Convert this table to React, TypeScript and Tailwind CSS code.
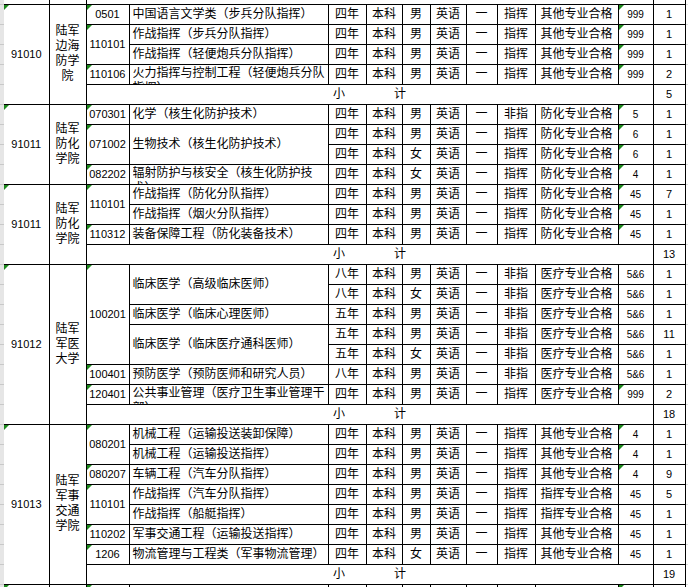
import React from "react";

type Row = {
  code?: string;
  codeSpan?: number;
  name?: string;
  nameSpan?: number;
  clip?: boolean;
  cells: string[];
  num: string;
  tri?: boolean;
  count: string;
};

type Group = {
  id: string;
  school: string[];
  rows: Row[];
  total?: string;
};

const std = (years: string, sex: string, kind: string, check: string) => [years, "本科", sex, "英语", "一", kind, check];

const groups: Group[] = [
  {
    id: "91010",
    school: ["陆军", "边海", "防学", "院"],
    total: "5",
    rows: [
      { code: "0501", name: "中国语言文学类（步兵分队指挥）", cells: std("四年", "男", "指挥", "其他专业合格"), num: "999", tri: true, count: "1" },
      { code: "110101", codeSpan: 2, name: "作战指挥（步兵分队指挥）", cells: std("四年", "男", "指挥", "其他专业合格"), num: "999", tri: true, count: "1" },
      { name: "作战指挥（轻便炮兵分队指挥）", cells: std("四年", "男", "指挥", "其他专业合格"), num: "999", tri: true, count: "1" },
      { code: "110106", name: "火力指挥与控制工程（轻便炮兵分队指挥）", clip: true, cells: std("四年", "男", "指挥", "其他专业合格"), num: "999", tri: true, count: "2" },
    ],
  },
  {
    id: "91011",
    school: ["陆军", "防化", "学院"],
    rows: [
      { code: "070301", name: "化学（核生化防护技术）", cells: std("四年", "男", "非指", "防化专业合格"), num: "5", tri: true, count: "1" },
      { code: "071002", codeSpan: 2, name: "生物技术（核生化防护技术）", nameSpan: 2, cells: std("四年", "男", "指挥", "防化专业合格"), num: "6", tri: true, count: "1" },
      { cells: std("四年", "女", "指挥", "防化专业合格"), num: "6", tri: true, count: "1" },
      { code: "082202", name: "辐射防护与核安全（核生化防护技术）", clip: true, cells: std("四年", "女", "指挥", "防化专业合格"), num: "4", tri: true, count: "1" },
    ],
  },
  {
    id: "91011",
    school: ["陆军", "防化", "学院"],
    total: "13",
    rows: [
      { code: "110101", codeSpan: 2, name: "作战指挥（防化分队指挥）", cells: std("四年", "男", "指挥", "防化专业合格"), num: "45", tri: true, count: "7" },
      { name: "作战指挥（烟火分队指挥）", cells: std("四年", "男", "指挥", "防化专业合格"), num: "45", tri: true, count: "1" },
      { code: "110312", name: "装备保障工程（防化装备技术）", cells: std("四年", "男", "指挥", "防化专业合格"), num: "45", tri: true, count: "1" },
    ],
  },
  {
    id: "91012",
    school: ["陆军", "军医", "大学"],
    total: "18",
    rows: [
      { code: "100201", codeSpan: 5, name: "临床医学（高级临床医师）", nameSpan: 2, cells: std("八年", "男", "非指", "医疗专业合格"), num: "5&6", count: "1" },
      { cells: std("八年", "女", "非指", "医疗专业合格"), num: "5&6", count: "1" },
      { name: "临床医学（临床心理医师）", cells: std("五年", "男", "非指", "医疗专业合格"), num: "5&6", count: "1" },
      { name: "临床医学（临床医疗通科医师）", nameSpan: 2, cells: std("五年", "男", "非指", "医疗专业合格"), num: "5&6", count: "11" },
      { cells: std("五年", "女", "非指", "医疗专业合格"), num: "5&6", count: "1" },
      { code: "100401", name: "预防医学（预防医师和研究人员）", cells: std("八年", "男", "非指", "医疗专业合格"), num: "5&6", count: "1" },
      { code: "120401", name: "公共事业管理（医疗卫生事业管理干部）", clip: true, cells: std("四年", "男", "指挥", "医疗专业合格"), num: "999", tri: true, count: "2" },
    ],
  },
  {
    id: "91013",
    school: ["陆军", "军事", "交通", "学院"],
    total: "19",
    rows: [
      { code: "080201", codeSpan: 2, name: "机械工程（运输投送装卸保障）", cells: std("四年", "男", "指挥", "其他专业合格"), num: "4", tri: true, count: "1" },
      { name: "机械工程（运输投送指挥）", cells: std("四年", "男", "指挥", "其他专业合格"), num: "4", tri: true, count: "1" },
      { code: "080207", name: "车辆工程（汽车分队指挥）", cells: std("四年", "男", "指挥", "其他专业合格"), num: "4", tri: true, count: "9" },
      { code: "110101", codeSpan: 2, name: "作战指挥（汽车分队指挥）", cells: std("四年", "男", "指挥", "指挥专业合格"), num: "45", count: "5" },
      { name: "作战指挥（船艇指挥）", cells: std("四年", "男", "指挥", "指挥专业合格"), num: "45", count: "1" },
      { code: "110202", name: "军事交通工程（运输投送指挥）", cells: std("四年", "男", "指挥", "其他专业合格"), num: "45", count: "1" },
      { code: "1206", name: "物流管理与工程类（军事物流管理）", cells: std("四年", "女", "指挥", "其他专业合格"), num: "45", count: "1" },
    ],
  },
];

// green "number stored as text" marker
const Tri = () => (
  <span className="absolute left-0 top-0 h-0 w-0 border-t-[5px] border-r-[5px] border-t-[#1e8a1e] border-r-transparent" />
);

const cell = "relative border border-black p-0 text-center align-middle";
const strip = "bg-[#e6e6e6] border-b border-[#c9c9c9] p-0";
const filler = "border-b border-[#d9d9d9] p-0";

const App = () => {
  return (
    <div className="h-[587px] w-[688px] overflow-hidden bg-white text-black font-['Liberation_Sans','Noto_Sans_CJK_SC',sans-serif] text-[12px]">
      <table className="table-fixed w-[688px]">
        <colgroup>
          <col className="w-[4px]" />
          <col className="w-[45px]" />
          <col className="w-[37px]" />
          <col className="w-[43px]" />
          <col className="w-[199px]" />
          <col className="w-[38px]" />
          <col className="w-[36px]" />
          <col className="w-[28px]" />
          <col className="w-[36px]" />
          <col className="w-[31px]" />
          <col className="w-[38px]" />
          <col className="w-[83px]" />
          <col className="w-[35px]" />
          <col className="w-[32px]" />
          <col className="w-[3px]" />
        </colgroup>
        <tbody>
          {/* tail of the previous subtotal row */}
          <tr className="h-[4px] leading-[0]">
            <td className={strip}></td>
            <td className="border-r border-b border-black p-0"></td>
            <td className="border-r border-b border-black p-0"></td>
            <td colSpan={10} className="border-r border-b border-black p-0"></td>
            <td className="border-r border-b border-black p-0"></td>
            <td className={filler}></td>
          </tr>

          {groups.map((g, gi) => {
            const span = g.rows.length + (g.total ? 1 : 0);
            return (
              <React.Fragment key={gi}>
                {g.rows.map((r, ri) => (
                  <tr key={ri} className="h-[20px]">
                    <td className={strip}></td>
                    {ri === 0 && (
                      <>
                        <td rowSpan={span} className="relative border-y border-r border-black p-0 text-center align-middle text-[11px]">
                          <Tri />
                          {g.id}
                        </td>
                        <td rowSpan={span} className={`${cell} leading-[15px] text-[12px]`}>
                          {g.school.map((s, si) => (
                            <div key={si}>{s}</div>
                          ))}
                        </td>
                      </>
                    )}
                    {r.code && (
                      <td rowSpan={r.codeSpan ?? 1} className={`${cell} text-[11px]`}>
                        <Tri />
                        {r.code}
                      </td>
                    )}
                    {r.name && (
                      <td rowSpan={r.nameSpan ?? 1} className="border border-black p-0 pl-[3px] text-left align-middle">
                        {r.clip ? (
                          <div className="h-[19px] overflow-hidden pt-[1px] leading-[15px]">{r.name}</div>
                        ) : (
                          <div className="whitespace-nowrap leading-[16px]">{r.name}</div>
                        )}
                      </td>
                    )}
                    {r.cells.map((c, ci) => (
                      <td key={ci} className={`${cell} whitespace-nowrap`}>
                        {c}
                      </td>
                    ))}
                    <td className={`${cell} text-[10px]`}>
                      {r.tri && <Tri />}
                      {r.num}
                    </td>
                    <td className={`${cell} text-[11px]`}>{r.count}</td>
                    <td className={filler}></td>
                  </tr>
                ))}
                {g.total && (
                  <tr className="h-[20px]">
                    <td className={strip}></td>
                    <td colSpan={10} className={cell}>
                      <span className="mr-[49px]">小</span>
                      <span>计</span>
                    </td>
                    <td className={`${cell} text-[11px]`}>{g.total}</td>
                    <td className={filler}></td>
                  </tr>
                )}
              </React.Fragment>
            );
          })}

          {/* top of the next group, cut off by the window */}
          <tr className="h-[20px]">
            <td className={strip}></td>
            <td className="relative border-y border-r border-black p-0">
              <Tri />
            </td>
            <td className={cell}></td>
            <td className={cell}>
              <Tri />
            </td>
            <td className={cell}></td>
            <td className={cell}></td>
            <td className={cell}></td>
            <td className={cell}></td>
            <td className={cell}></td>
            <td className={cell}></td>
            <td className={cell}></td>
            <td className={cell}></td>
            <td className={cell}>
              <Tri />
            </td>
            <td className={cell}></td>
            <td className={filler}></td>
          </tr>
        </tbody>
      </table>
    </div>
  );
};

export default App;
